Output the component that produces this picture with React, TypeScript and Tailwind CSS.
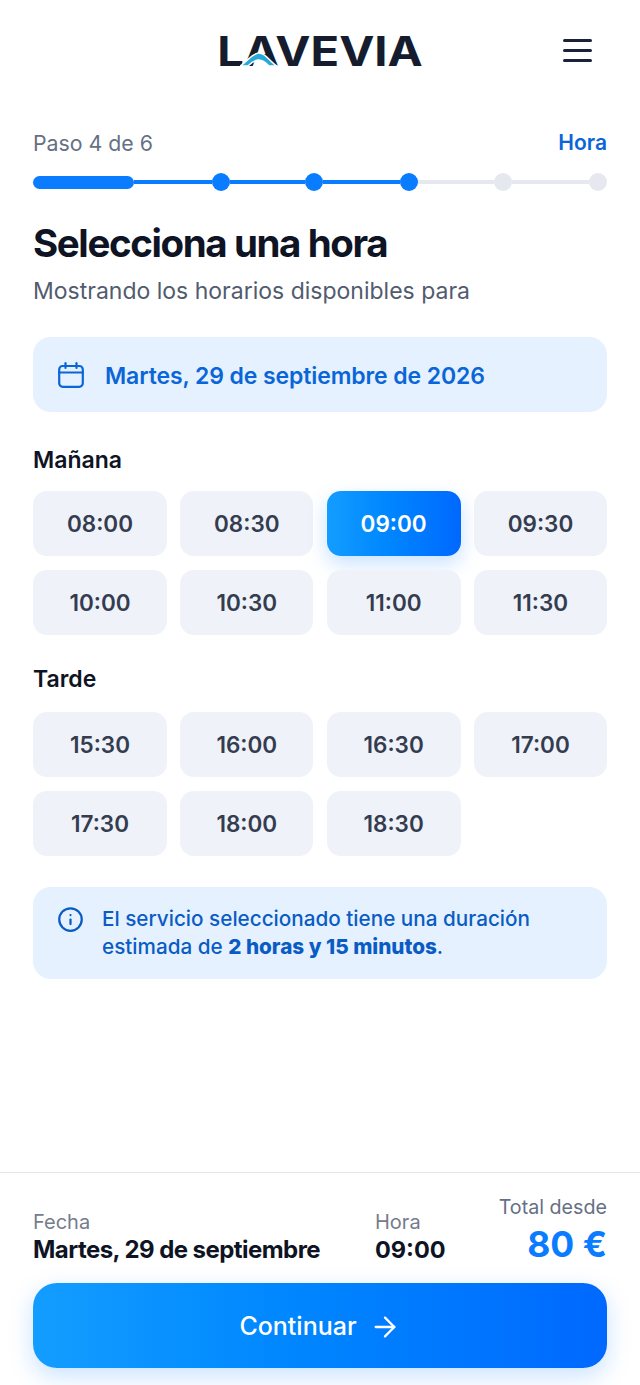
import { ArrowRight, Info } from "lucide-react";

const morning = ["08:00", "08:30", "09:00", "09:30", "10:00", "10:30", "11:00", "11:30"];
const afternoon = ["15:30", "16:00", "16:30", "17:00", "17:30", "18:00", "18:30"];

function Logo() {
  return (
    <div className="relative mt-[2px] h-[36px] w-[202px]">
      <span className="block origin-center scale-x-[1.15] text-center font-['Inter',sans-serif] text-[41px] font-bold leading-[36px] tracking-[0px] text-[#141c2e]">
        LAVEVIA
      </span>
      {/* swoosh under the first A */}
      <svg className="absolute left-[21px] top-[15px]" width="40" height="18" viewBox="0 0 40 18">
        <path d="M0 18 C7 14 12 5 19 5 C26 5 30 14 37 18 L29 18 C26 15 23 12 19 12 C15 12 11 15 8 18 Z" fill="#2aa9d6" stroke="#ffffff" strokeWidth="1.5" />
      </svg>
    </div>
  );
}

function Stepper() {
  return (
    <div className="flex items-center">
      <div className="h-[13px] w-[101px] rounded-full bg-[#0a7cff]" />
      <div className="h-[4px] w-[78px] bg-[#0a7cff]" />
      <div className="size-[18px] rounded-full bg-[#0a7cff]" />
      <div className="h-[4px] w-[75px] bg-[#0a7cff]" />
      <div className="size-[18px] rounded-full bg-[#0a7cff]" />
      <div className="h-[4px] w-[77px] bg-[#0a7cff]" />
      <div className="size-[18px] rounded-full bg-[#0a7cff]" />
      <div className="h-[4px] w-[76px] bg-[#e5e8ef]" />
      <div className="size-[18px] rounded-full bg-[#e5e8ef]" />
      <div className="h-[4px] w-[77px] bg-[#e5e8ef]" />
      <div className="size-[18px] rounded-full bg-[#e5e8ef]" />
    </div>
  );
}

function TimeGrid({ times }: { times: string[] }) {
  return (
    <div className="grid grid-cols-[134px_133px_134px_133px] gap-x-[13.33px] gap-y-[14px]">
      {times.map((time) =>
        time === "09:00" ? (
          <div
            key={time}
            className="flex h-[65px] items-center justify-center rounded-[14px] bg-gradient-to-r from-[#149dff] to-[#0068ff] text-[22.5px] font-semibold text-white shadow-[0_8px_20px_rgba(10,124,255,0.22)]"
          >
            {time}
          </div>
        ) : (
          <div
            key={time}
            className="flex h-[65px] items-center justify-center rounded-[14px] bg-[#eff2f9] text-[22.5px] font-semibold text-[#343c4f]"
          >
            {time}
          </div>
        )
      )}
    </div>
  );
}

export default function App() {
  return (
    <div className="flex h-[1385px] w-[640px] flex-col overflow-hidden bg-white font-['Inter',sans-serif]">
      {/* HEADER */}
      <header className="relative flex h-[100px] items-center justify-center">
        <Logo />
        <div className="absolute right-[48px] top-[39px] flex w-[29px] flex-col gap-[7px]">
          <span className="h-[3px] rounded-full bg-[#1a2238]" />
          <span className="h-[3px] rounded-full bg-[#1a2238]" />
          <span className="h-[3px] rounded-full bg-[#1a2238]" />
        </div>
      </header>

      <main className="flex-1 px-[33px]">
        {/* PROGRESS */}
        <div className="mt-[29px] flex items-center justify-between">
          <span className="text-[21.3px] leading-[28px] text-[#667085]">Paso 4 de 6</span>
          <span className="text-[21px] font-semibold leading-[28px] text-[#0a66d8]">Hora</span>
        </div>
        <div className="mt-[16px]">
          <Stepper />
        </div>

        <h1 className="mt-[28px] text-[38.5px] font-bold leading-[48px] tracking-[-1.4px] text-[#0e1424]">
          Selecciona una hora
        </h1>
        <p className="mt-[9px] text-[23px] leading-[30px] text-[#525b6e]">
          Mostrando los horarios disponibles para
        </p>

        {/* DATE */}
        <div className="mt-[31px] flex h-[75px] items-center gap-[21px] rounded-[18px] bg-[#e5f1fe] pl-[25px]">
          <svg width="26" height="26" viewBox="0 0 26 26" fill="none" stroke="#0a66d8" strokeWidth="2.2" strokeLinecap="round">
            <rect x="1.2" y="4" width="23.6" height="20.8" rx="3.5" />
            <path d="M1.2 10.5H24.8" />
            <path d="M7.5 1.2V6" />
            <path d="M18.5 1.2V6" />
          </svg>
          <span className="pt-[3px] text-[23px] font-semibold tracking-[-0.1px] text-[#0a66d8]">
            Martes, 29 de septiembre de 2026
          </span>
        </div>

        <h2 className="mt-[33px] text-[23px] font-semibold leading-[30px] text-[#0e1424]">Mañana</h2>
        <div className="mt-[16px]">
          <TimeGrid times={morning} />
        </div>

        <h2 className="mt-[29px] text-[23px] font-semibold leading-[30px] text-[#0e1424]">Tarde</h2>
        <div className="mt-[18px]">
          <TimeGrid times={afternoon} />
        </div>

        {/* INFO */}
        <div className="mt-[31px] flex h-[92px] items-center gap-[18px] rounded-[18px] bg-[#e5f1fe] pl-[24px]">
          <Info size={27} strokeWidth={2} className="-mt-[28px] text-[#0a5cc4]" />
          <p className="text-[20.7px] font-medium leading-[28px] text-[#0a5cc4]">
            El servicio seleccionado tiene una duración
            <br />
            estimada de <strong className="font-extrabold">2 horas y 15 minutos</strong>.
          </p>
        </div>
      </main>

      {/* FOOTER */}
      <footer className="h-[213px] border-t border-[#e4e6eb] px-[33px]">
        <div className="flex items-end pt-[20px]">
          <div className="w-[342px] pb-[2px]">
            <div className="text-[20px] leading-[26px] text-[#757c8c]">Fecha</div>
            <div className="text-[24px] font-bold leading-[30px] tracking-[-0.55px] text-[#0e1424]">
              Martes, 29 de septiembre
            </div>
          </div>
          <div className="pb-[2px]">
            <div className="text-[20px] leading-[26px] text-[#757c8c]">Hora</div>
            <div className="text-[23.5px] font-bold leading-[30px] text-[#0e1424]">09:00</div>
          </div>
          <div className="ml-auto text-right">
            <div className="text-[19.7px] leading-[28px] text-[#667085]">Total desde</div>
            <div className="pt-[2px] text-[35.5px] font-bold leading-[44px] text-[#0a7cff]">80 €</div>
          </div>
        </div>
        <button className="mt-[16px] flex h-[85px] w-full items-center justify-center gap-[12px] rounded-[24px] bg-gradient-to-r from-[#149dff] to-[#0068ff] pt-[2px] text-[25px] font-medium text-white shadow-[0_8px_24px_rgba(10,124,255,0.22)]">
          Continuar
          <ArrowRight size={32} strokeWidth={1.7} />
        </button>
      </footer>
    </div>
  );
}
